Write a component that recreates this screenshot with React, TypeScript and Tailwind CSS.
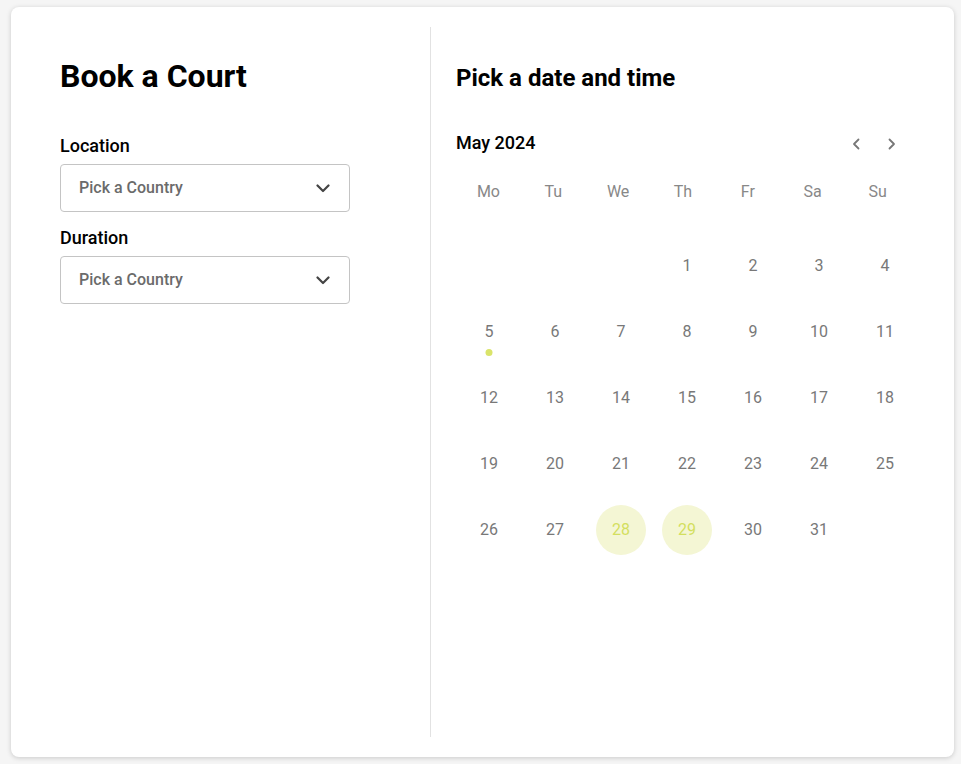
import React from "react";

const days: (number | null)[] = [null, null, null, 1, 2, 3, 4, 5, 6, 7, 8, 9, 10, 11, 12, 13, 14, 15, 16, 17, 18, 19, 20, 21, 22, 23, 24, 25, 26, 27, 28, 29, 30, 31];
const weekdays = ["Mo", "Tu", "We", "Th", "Fr", "Sa", "Su"];
const picked = [28, 29];

function SelectBox({ label }: { label: string }) {
  return (
    <div className="flex flex-col">
      <label className="text-[18px] leading-6 font-medium text-black">{label}</label>
      <div className="mt-[6px] w-[290px] h-[48px] border border-[#c4c4c4] rounded-[4px] flex items-center justify-between pl-[18px] pr-[19px]">
        <span className="text-[16px] font-medium text-[#6b6b6b]">Pick a Country</span>
        <svg width="14" height="9" viewBox="0 0 14 9" fill="none">
          <path d="M1.5 1.5 7 7l5.5-5.5" stroke="#444" strokeWidth="2.2" strokeLinecap="round" strokeLinejoin="round" />
        </svg>
      </div>
    </div>
  );
}

export default function App() {
  return (
    <div className="min-h-screen bg-[#f5f5f5] pt-[7px] pl-[11px]" style={{ fontFamily: "Roboto, 'Liberation Sans', sans-serif" }}>
      <div className="w-[943px] h-[750px] bg-white rounded-[8px] shadow-[0_1px_5px_rgba(0,0,0,0.18)] flex py-[20px]">
        {/* left */}
        <div className="w-[420px] border-r border-[#e2e2e2] pl-[49px] pt-[29px]">
          <h1 className="text-[32px] leading-10 font-bold text-black">Book a Court</h1>
          <div className="mt-[38px] flex flex-col gap-[14px]">
            <SelectBox label="Location" />
            <SelectBox label="Duration" />
          </div>
        </div>

        {/* right */}
        <div className="flex-1 pl-[25px] pt-[35px]">
          <h2 className="text-[24px] leading-8 font-bold text-black">Pick a date and time</h2>
          <div className="mt-[32px] w-[447px] h-[32px] flex items-center justify-between">
            <span className="text-[18px] font-medium text-black">May 2024</span>
            <div className="flex gap-[11px] pt-[4px]">
              <button className="w-6 h-6 flex items-center justify-center">
                <svg width="9" height="12" viewBox="0 0 9 12" fill="none">
                  <path d="M6.5 1.5 2 6l4.5 4.5" stroke="#777" strokeWidth="1.8" strokeLinecap="round" strokeLinejoin="round" />
                </svg>
              </button>
              <button className="w-6 h-6 flex items-center justify-center">
                <svg width="9" height="12" viewBox="0 0 9 12" fill="none">
                  <path d="M2.5 1.5 7 6l-4.5 4.5" stroke="#777" strokeWidth="1.8" strokeLinecap="round" strokeLinejoin="round" />
                </svg>
              </button>
            </div>
          </div>
          <div className="mt-[18px] w-[454px] grid grid-cols-7 h-[32px] items-center">
            {weekdays.map((w) => (
              <span key={w} className="text-center text-[16px] text-[#888]">{w}</span>
            ))}
          </div>
          <div className="mt-[25px] w-[462px] grid grid-cols-7">
            {days.map((d, i) => (
              <div key={i} className="relative h-[66px] flex items-center justify-center">
                {d !== null && (
                  <span
                    className={
                      picked.includes(d)
                        ? "w-[50px] h-[50px] rounded-full bg-[#f4f6d4] text-[#d3df5e] text-[16px] flex items-center justify-center"
                        : "text-[16px] text-[#787878]"
                    }
                  >
                    {d}
                  </span>
                )}
                {d === 5 && <span className="absolute bottom-[9px] left-1/2 -translate-x-1/2 w-[7px] h-[7px] rounded-full bg-[#dae46a]" />}
              </div>
            ))}
          </div>
        </div>
      </div>
    </div>
  );
}
